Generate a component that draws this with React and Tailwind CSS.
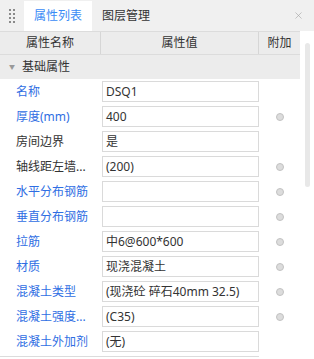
import { X } from "lucide-react";

const rows = [
  { label: "名称", value: "DSQ1", blue: true, dot: false },
  { label: "厚度(mm)", value: "400", blue: true, dot: true },
  { label: "房间边界", value: "是", blue: false, dot: false },
  { label: "轴线距左墙...", value: "(200)", blue: false, dot: true },
  { label: "水平分布钢筋", value: "", blue: true, dot: true },
  { label: "垂直分布钢筋", value: "", blue: true, dot: true },
  { label: "拉筋", value: "中6@600*600", blue: true, dot: true },
  { label: "材质", value: "现浇混凝土", blue: true, dot: true },
  { label: "混凝土类型", value: "(现浇砼 碎石40mm 32.5)", blue: true, dot: true },
  { label: "混凝土强度...", value: "(C35)", blue: true, dot: true },
  { label: "混凝土外加剂", value: "(无)", blue: true, dot: false },
];

function DragHandle() {
  return (
    <div className="grid grid-cols-2 gap-x-[2px] gap-y-[2px]">
      {Array.from({ length: 8 }).map((_, i) => (
        <span key={i} className="block w-[2px] h-[2px] bg-[#8a8a8a]" />
      ))}
    </div>
  );
}

export default function App() {
  return (
    <div
      className="w-[314px] h-[359px] overflow-hidden bg-white text-[12px] text-[#333]"
      style={{ fontFamily: '"Noto Sans", "Noto Sans CJK SC", sans-serif' }}
    >
      {/* Tabs */}
      <div className="flex h-[31px] bg-[#f0f0f0]">
        <div className="w-[24px] flex items-center justify-center">
          <DragHandle />
        </div>
        <div className="mt-[1px] w-[68px] bg-white text-[#3a8bf6] flex items-center justify-center">
          属性列表
        </div>
        <div className="px-[10px] flex items-center">图层管理</div>
        <div className="ml-auto w-[32px] flex items-center justify-center text-[#a0a0a0]">
          <X className="w-[11px] h-[11px]" strokeWidth={1.3} />
        </div>
      </div>

      <div className="flex">
        <div className="w-[300px]">
          {/* Column header */}
          <div className="flex h-[24px] bg-[#ececec] border-y border-[#dcdcdc]">
            <div className="w-[101px] flex items-center justify-center border-r border-[#d6d6d6]">
              属性名称
            </div>
            <div className="w-[158px] flex items-center justify-center border-r border-[#d6d6d6]">
              属性值
            </div>
            <div className="flex-1 flex items-center justify-center">附加</div>
          </div>

          {/* Group */}
          <div className="flex items-center h-[24px] bg-[#ececec]">
            <span className="w-[22px] pl-[9px] text-[6px] text-[#999]">▼</span>
            <span>基础属性</span>
          </div>

          {/* Rows */}
          {rows.map((r) => (
            <div key={r.label} className="flex items-center h-[25px]">
              <div
                className={`w-[102px] shrink-0 pl-[16px] whitespace-nowrap ${
                  r.blue ? "text-[#2f6ee3]" : "text-[#333]"
                }`}
              >
                {r.label}
              </div>
              <div className="w-[157px] shrink-0 h-[21px] border border-[#dadada] bg-white pl-[3px] flex items-center whitespace-nowrap overflow-hidden">
                {r.value}
              </div>
              <div className="flex-1 flex items-center justify-center pl-[1px]">
                {r.dot && (
                  <span className="block w-[8px] h-[8px] rounded-full bg-[#dcdcdc] border border-[#c2c2c2]" />
                )}
              </div>
            </div>
          ))}
          <div className="mt-[2px] w-[259px] h-[1px] bg-[#dcdcdc]" />
        </div>

        {/* Scrollbar */}
        <div className="w-[14px] pl-[5px] pt-[12px]">
          <div className="w-[5px] h-[144px] rounded-full bg-[#e8e8e8]" />
        </div>
      </div>
    </div>
  );
}
